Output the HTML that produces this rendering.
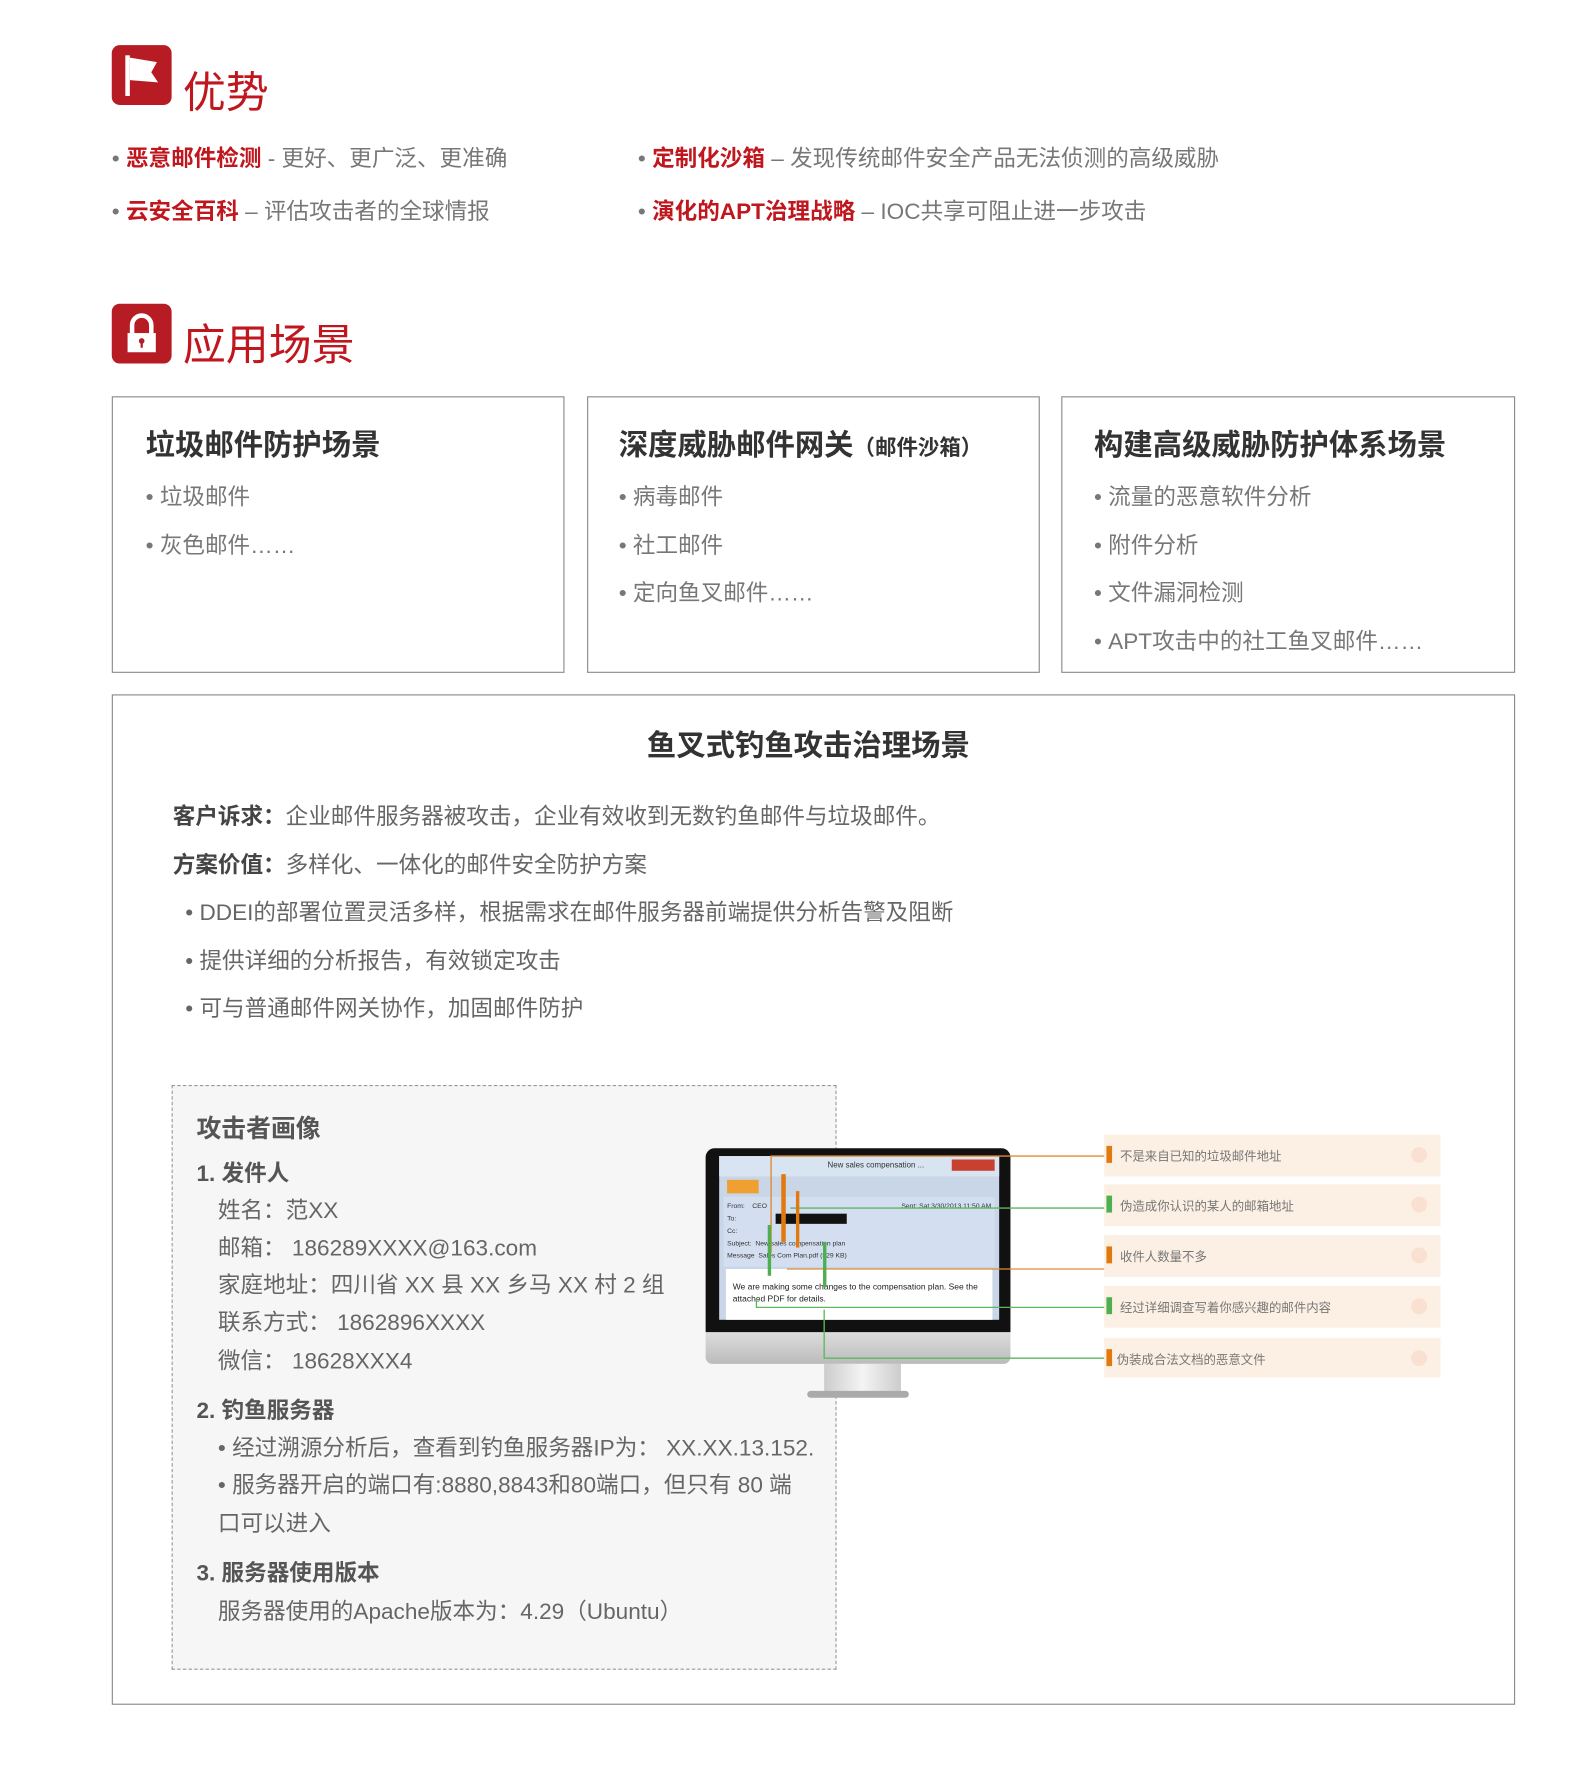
<!DOCTYPE html>
<html><head><meta charset="utf-8"><style>
html,body{margin:0;padding:0;background:#fff;width:1586px;height:1771px;overflow:hidden}
#w{position:absolute;left:0;top:0;width:1420px;height:1586px;transform:scale(1.129);transform-origin:0 0;font-family:"Liberation Sans","Noto Sans CJK SC",sans-serif;color:#666}
.a{position:absolute;white-space:nowrap}
.ic{position:absolute;width:53px;height:53px;background:#b71c24;border-radius:7px}
.h1{font-size:38px;color:#c0161e}
.r{color:#c0161e;font-weight:bold}
.bl{font-size:20px;color:#777}
.box{position:absolute;border:1px solid #8a8a8a;box-sizing:border-box}
.bt{font-size:26px;font-weight:bold;color:#333}
.it{font-size:20px;color:#777;line-height:42.5px}
.lb{font-weight:bold;color:#444}
.p{font-size:20px;color:#666}
.q{position:absolute;white-space:nowrap;font-size:20px;color:#666;line-height:24px}
.lab{position:absolute;left:978px;width:298px;height:37px;background:#fcefe4}
.lab span{position:absolute;left:14px;top:11px;font-size:11px;color:#777}
.lab i{position:absolute;left:2px;top:10px;width:5px;height:15px}
.lab b{position:absolute;right:12px;top:11px;width:14px;height:14px;border-radius:50%;background:#f9e0d0}
</style></head><body><div id="w">
<div class="ic" style="left:99px;top:40px"><svg width="53" height="53"><rect x="12" y="9" width="4" height="36" fill="#fff"/><path d="M16 11 L40 15 L35 24 L41 33 L16 31Z" fill="#fff"/></svg></div>
<div class="a h1" style="left:162px;top:51px">优势</div>
<div class="a bl" style="left:99px;top:124px">• <span class="r">恶意邮件检测</span> - 更好、更广泛、更准确</div>
<div class="a bl" style="left:565px;top:124px">• <span class="r">定制化沙箱</span> – 发现传统邮件安全产品无法侦测的高级威胁</div>
<div class="a bl" style="left:99px;top:171px">• <span class="r">云安全百科</span> – 评估攻击者的全球情报</div>
<div class="a bl" style="left:565px;top:171px">• <span class="r">演化的APT治理战略</span> – IOC共享可阻止进一步攻击</div>
<div class="ic" style="left:99px;top:269px"><svg width="53" height="53"><path d="M18 26 V19 a8.5 8.5 0 0 1 17 0 V26" stroke="#fff" stroke-width="4" fill="none"/><rect x="14" y="26" width="25" height="17" fill="#fff"/><circle cx="26.5" cy="33" r="2.5" fill="#b71c24"/><rect x="25.5" y="33" width="2" height="6" fill="#b71c24"/></svg></div>
<div class="a h1" style="left:162px;top:275px">应用场景</div>

<div class="box" style="left:99px;top:351px;width:401px;height:245px"><div class="a bt" style="left:29px;top:22px">垃圾邮件防护场景</div><div class="a it" style="left:29px;top:68px">• 垃圾邮件<br>• 灰色邮件……</div></div>
<div class="box" style="left:520px;top:351px;width:401px;height:245px"><div class="a bt" style="left:27px;top:22px">深度威胁邮件网关<span style="font-size:19px">（邮件沙箱）</span></div><div class="a it" style="left:27px;top:68px">• 病毒邮件<br>• 社工邮件<br>• 定向鱼叉邮件……</div></div>
<div class="box" style="left:940px;top:351px;width:402px;height:245px"><div class="a bt" style="left:28px;top:22px">构建高级威胁防护体系场景</div><div class="a it" style="left:28px;top:68px">• 流量的恶意软件分析<br>• 附件分析<br>• 文件漏洞检测<br>• APT攻击中的社工鱼叉邮件……</div></div>

<div class="box" style="left:99px;top:615px;width:1243px;height:895px"></div>
<div class="a bt" style="left:0;width:1432px;text-align:center;top:640px">鱼叉式钓鱼攻击治理场景</div>
<div class="a p" style="left:153px;top:703px;line-height:42.5px"><span class="lb">客户诉求：</span>企业邮件服务器被攻击，企业有效收到无数钓鱼邮件与垃圾邮件。<br><span class="lb">方案价值：</span>多样化、一体化的邮件安全防护方案<br>&nbsp;&nbsp;• DDEI的部署位置灵活多样，根据需求在邮件服务器前端提供分析告警及阻断<br>&nbsp;&nbsp;• 提供详细的分析报告，有效锁定攻击<br>&nbsp;&nbsp;• 可与普通邮件网关协作，加固邮件防护</div>

<div style="position:absolute;left:152px;top:961px;width:589px;height:518px;border:1px dashed #999;box-sizing:border-box;background:#f6f6f6"></div>
<div class="a" style="left:174px;top:982px;font-size:22px;font-weight:bold;color:#555">攻击者画像</div>
<div class="q lb" style="left:174px;top:1028px;color:#555">1. 发件人</div>
<div class="q" style="left:193px;top:1061px">姓名：范XX</div>
<div class="q" style="left:193px;top:1094px">邮箱： 186289XXXX@163.com</div>
<div class="q" style="left:193px;top:1127px">家庭地址：四川省 XX 县 XX 乡马 XX 村 2 组</div>
<div class="q" style="left:193px;top:1160px">联系方式： 1862896XXXX</div>
<div class="q" style="left:193px;top:1194px">微信： 18628XXX4</div>
<div class="q lb" style="left:174px;top:1238px;color:#555">2. 钓鱼服务器</div>
<div class="q" style="left:193px;top:1271px">• 经过溯源分析后，查看到钓鱼服务器IP为： XX.XX.13.152.</div>
<div class="q" style="left:193px;top:1304px">• 服务器开启的端口有:8880,8843和80端口，但只有 80 端</div>
<div class="q" style="left:193px;top:1338px">口可以进入</div>
<div class="q lb" style="left:174px;top:1382px;color:#555">3. 服务器使用版本</div>
<div class="q" style="left:193px;top:1416px">服务器使用的Apache版本为：4.29（Ubuntu）</div>

<!-- monitor -->
<div style="position:absolute;left:625px;top:1017px;width:270px;height:163px;background:#111;border-radius:8px 8px 0 0"></div>
<div style="position:absolute;left:625px;top:1180px;width:270px;height:28px;background:linear-gradient(#ddd,#bbb);border-radius:0 0 6px 6px"></div>
<div style="position:absolute;left:730px;top:1208px;width:68px;height:26px;background:linear-gradient(90deg,#ccc,#f4f4f4,#ccc)"></div>
<div style="position:absolute;left:715px;top:1232px;width:90px;height:6px;background:#aaa;border-radius:3px"></div>
<div style="position:absolute;left:637px;top:1024px;width:248px;height:145px;background:#c8d6e8">
<div style="position:absolute;left:0;top:0;width:248px;height:18px;background:#d9e4f2;font-size:7px;color:#333;padding-left:96px;box-sizing:border-box;line-height:18px">New sales compensation ...</div>
<div style="position:absolute;left:206px;top:3px;width:38px;height:10px;background:#c84030"></div>
<div style="position:absolute;left:7px;top:21px;width:28px;height:12px;background:#f0a030"></div>
<div style="position:absolute;left:4px;top:36px;width:240px;height:62px;background:#d3dff0;font-size:6px;color:#333;line-height:11px;padding:4px 3px;box-sizing:border-box">From: &nbsp;&nbsp;&nbsp;CEO<span style="float:right">Sent: Sat 3/30/2013 11:50 AM</span><br>To:<br>Cc:<br>Subject: &nbsp;New sales compensation plan<br>Message &nbsp;Sales Com Plan.pdf (529 KB)</div>
<div style="position:absolute;left:50px;top:51px;width:63px;height:9px;background:#111"></div>
<div style="position:absolute;left:6px;top:100px;width:236px;height:45px;background:#fff;font-size:7.5px;color:#222;line-height:11px;padding:10px 6px;box-sizing:border-box">We are making some changes to the compensation plan. See the attached PDF for details.</div>
</div>
<svg style="position:absolute;left:0;top:0" width="1420" height="1586">
<g fill="none" stroke-width="1.2">
<path d="M683 1110 V1024 H980" stroke="#e08a30"/>
<path d="M700 1070 H980" stroke="#5cb85c"/>
<path d="M697 1124 H980" stroke="#e08a30"/>
<path d="M670 1150 V1158 H980" stroke="#5cb85c"/>
<path d="M730 1160 V1203 H980" stroke="#5cb85c"/>
</g>
<rect x="692" y="1040" width="4" height="60" fill="#e07a10"/><rect x="705" y="1055" width="3" height="50" fill="#e07a10"/>
<rect x="680" y="1085" width="3" height="45" fill="#4caf50"/><rect x="729" y="1100" width="3" height="40" fill="#4caf50"/>
</svg>
<div class="lab" style="top:1005px"><i style="background:#e07a10"></i><span>不是来自已知的垃圾邮件地址</span><b></b></div>
<div class="lab" style="top:1049px"><i style="background:#4caf50"></i><span>伪造成你认识的某人的邮箱地址</span><b></b></div>
<div class="lab" style="top:1094px"><i style="background:#e07a10"></i><span>收件人数量不多</span><b></b></div>
<div class="lab" style="top:1139px"><i style="background:#4caf50"></i><span>经过详细调查写着你感兴趣的邮件内容</span><b></b></div>
<div class="lab" style="top:1185px;height:35px"><i style="background:#e07a10"></i><span style="left:11px">伪装成合法文档的恶意文件</span><b></b></div>
</div></body></html>
